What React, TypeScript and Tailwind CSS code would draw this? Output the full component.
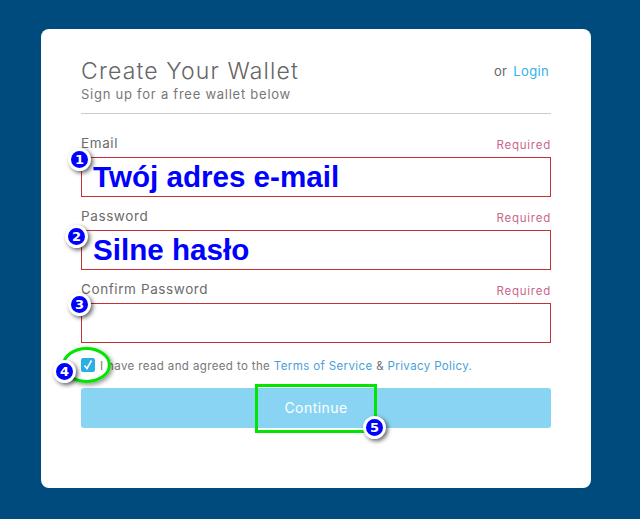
const font = "font-['Inter','Open_Sans',sans-serif]";

function Badge({ n, className }: { n: number; className: string }) {
  return (
    <div
      className={`absolute flex h-[23px] w-[23px] items-center justify-center rounded-full border-[3px] border-white bg-[#0000ff] font-['DejaVu_Sans',sans-serif] text-[13px] leading-none font-bold text-white shadow-[2px_2px_4px_rgba(0,0,0,0.6)] ${className}`}
    >
      {n}
    </div>
  );
}

function Field({
  label,
  value,
  badge,
  badgeClass,
}: {
  label: string;
  value?: string;
  badge: number;
  badgeClass: string;
}) {
  return (
    <div className="relative">
      <div className="flex h-[21px] items-start justify-between">
        <span className="-mt-[1px] text-[13.5px] leading-[17px] tracking-[0.6px] text-[#6b6b6b]">{label}</span>
        <span className="mt-[1px] text-[11.5px] leading-[16px] tracking-[0.75px] text-[#c9678c]">Required</span>
      </div>
      <div className="flex h-[40px] items-center border border-[#c62f34] pl-[11px]">
        {value && (
          <span className="-mt-[1px] font-['Liberation_Sans',sans-serif] text-[29.6px] leading-none font-bold text-[#0000ff]">
            {value}
          </span>
        )}
      </div>
      <Badge n={badge} className={badgeClass} />
    </div>
  );
}

export default function App() {
  return (
    <div className={`h-[519px] w-[640px] overflow-hidden bg-[#004b7d] pt-[29px] pl-[41px] ${font}`}>
      <div className="relative h-[459px] w-[550px] rounded-lg bg-white px-[40px] pt-[28px]">
        <div className="flex items-start justify-between border-b border-[#cccccc] pb-[10px]">
          <div>
            <h1 className="text-[23px] leading-[28px] font-light tracking-[1.15px] text-[#666666]">
              Create Your Wallet
            </h1>
            <p className="text-[13px] leading-[18px] tracking-[0.75px] text-[#777777]">
              Sign up for a free wallet below
            </p>
          </div>
          <div className="mt-[5px] mr-[2px] text-[13px] leading-[18px] tracking-[0.35px]">
            <span className="text-[#666666]">or</span>
            <span className="ml-[6px] text-[#34b0ea]">Login</span>
          </div>
        </div>

        <div className="mt-[22px] flex flex-col gap-[12px]">
          <Field label="Email" value="Twój adres e-mail" badge={1} badgeClass="-left-[13px] top-[12px]" />
          <Field label="Password" value="Silne hasło" badge={2} badgeClass="-left-[16px] top-[16px]" />
          <Field label="Confirm Password" badge={3} badgeClass="-left-[13px] top-[11px]" />
        </div>

        <div className="mt-[15px] flex h-[14px] items-center text-[11.5px] tracking-[0.38px] text-[#777777]">
          <span className="flex h-[14px] w-[14px] items-center justify-center rounded-[2px] bg-[#29aee6]">
            <svg viewBox="0 0 14 14" className="h-[14px] w-[14px]" fill="none" stroke="white" strokeWidth="1.6">
              <path d="M3.5 7.5 6 10.5 10.5 2.5" />
            </svg>
          </span>
          <span className="mt-[3px] ml-[5px]">
            I have read and agreed to the <span className="text-[#4a9fd8]">Terms of Service</span> &amp;{" "}
            <span className="text-[#4a9fd8]">Privacy Policy.</span>
          </span>
        </div>

        <button className="mt-[16px] flex h-[40px] w-full items-center justify-center rounded-[3px] bg-[#8ad4f3] pb-[2px] text-[14px] tracking-[0.45px] text-white">
          Continue
        </button>

        {/* annotations drawn over the form */}
        <div className="absolute top-[318px] left-[21px] h-[36px] w-[49px] rounded-[50%] border-[3px] border-[#00e600] shadow-[2px_2px_4px_rgba(0,0,0,0.4)]" />
        <div className="absolute top-[355px] left-[214px] h-[49px] w-[122px] border-[3px] border-[#00e600]" />
        <Badge n={4} className="left-[12px] top-[331px]" />
        <Badge n={5} className="left-[322px] top-[387px]" />
      </div>
    </div>
  );
}
